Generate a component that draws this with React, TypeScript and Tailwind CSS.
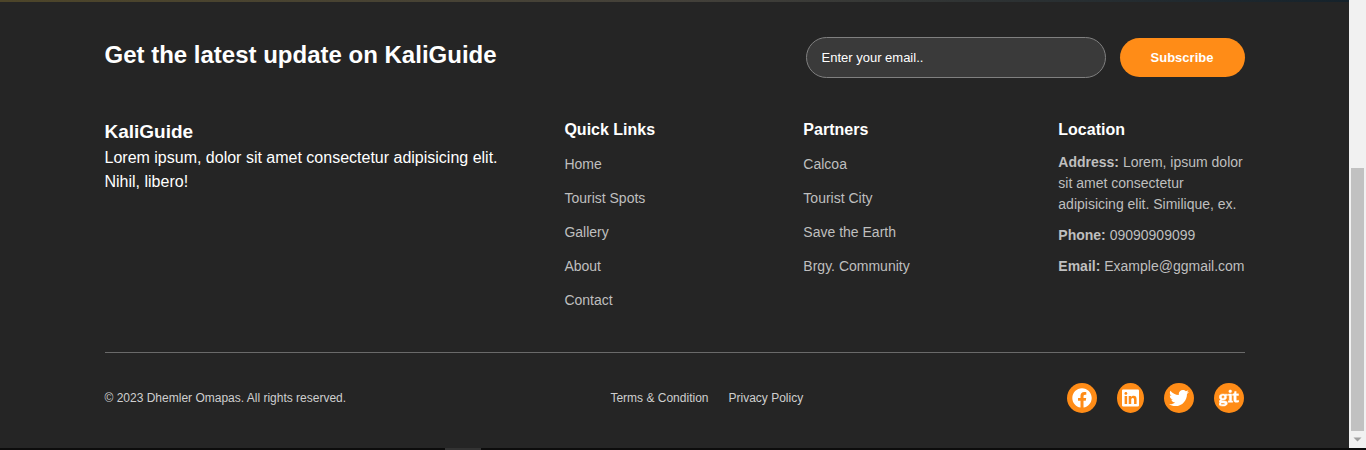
import { FaFacebook, FaGit, FaLinkedin, FaTwitter } from "react-icons/fa";

const quickLinks = ["Home", "Tourist Spots", "Gallery", "About", "Contact"];
const partners = ["Calcoa", "Tourist City", "Save the Earth", "Brgy. Community"];

function LinkColumn({ title, items }: { title: string; items: string[] }) {
  return (
    <nav aria-label={title}>
      <h3 className="text-base font-bold text-white">{title}</h3>
      <ul className="mt-[11px] flex flex-col gap-3">
        {items.map((item) => (
          <li key={item} className="text-sm leading-[22px]">
            <a href="#" className="text-[#bfbfbf] hover:text-white">
              {item}
            </a>
          </li>
        ))}
      </ul>
    </nav>
  );
}

function Newsletter() {
  return (
    <section className="flex items-center justify-between">
      <h2 className="-mt-1.5 text-2xl font-bold">Get the latest update on KaliGuide</h2>
      <form className="flex items-center gap-[14px]" onSubmit={(e) => e.preventDefault()}>
        <input
          type="email"
          aria-label="Email"
          placeholder="Enter your email.."
          className="h-[41px] w-[300px] rounded-full border border-[#808080] bg-[#3a3a3a] px-[15px] text-[13px] text-white outline-none placeholder:text-white"
        />
        <button
          type="submit"
          className="h-[39px] w-[125px] rounded-full bg-[#ff8c17] text-[13px] font-bold text-white"
        >
          Subscribe
        </button>
      </form>
    </section>
  );
}

const socialClass = "rounded-[50%] bg-[#ff8c17] p-[5px] text-white";

function SocialLinks() {
  return (
    <div className="flex items-center gap-5">
      <a href="#" aria-label="Facebook" className={socialClass}>
        <FaFacebook className="h-5 w-5" />
      </a>
      <a href="#" aria-label="LinkedIn" className={socialClass}>
        <FaLinkedin className="h-5 w-[17px]" />
      </a>
      <a href="#" aria-label="Twitter" className={socialClass}>
        <FaTwitter className="h-5 w-5" />
      </a>
      <a href="#" aria-label="Git" className={socialClass}>
        <FaGit className="h-5 w-5" stroke="currentColor" strokeWidth={12} />
      </a>
    </div>
  );
}

function ScrollTrack() {
  return (
    <div aria-hidden="true" className="flex w-[17px] shrink-0 flex-col items-center bg-[#f1f1f1]">
      <div className="grow-[168]" />
      <div className="w-[13px] grow-[263] bg-[#c1c1c1]" />
      <svg className="h-[17px] w-[17px] shrink-0" viewBox="0 0 17 17">
        <path d="M4.5 6.5h8l-4 4z" fill="#a0a0a0" />
      </svg>
    </div>
  );
}

export default function App() {
  return (
    <div className="flex min-h-screen flex-col bg-[#0c0c0c] font-['Liberation_Sans',Arial,sans-serif] text-white">
      <div className="flex grow">
        <div className="flex grow flex-col bg-[#252525]">
          <div className="h-[2px] bg-linear-to-r from-[#4d4529] via-[#44413a] to-[#15222b]" />
          <footer className="mx-auto w-full max-w-[1140px] pt-[35px]">
            <Newsletter />
            <div className="mt-10 grid grid-cols-[460fr_239fr_255fr_186fr] pb-[41px]">
              <section>
                <h2 className="text-[19px] leading-7 font-bold">KaliGuide</h2>
                <p className="max-w-[400px] text-base">
                  Lorem ipsum, dolor sit amet consectetur adipisicing elit. Nihil, libero!
                </p>
              </section>
              <LinkColumn title="Quick Links" items={quickLinks} />
              <LinkColumn title="Partners" items={partners} />
              <section>
                <h3 className="text-base font-bold">Location</h3>
                <address className="mt-[10px] flex flex-col gap-[10px] text-sm leading-[21px] text-[#bfbfbf] not-italic">
                  <p>
                    <b>Address:</b> Lorem, ipsum dolor sit amet consectetur adipisicing elit. Similique, ex.
                  </p>
                  <p>
                    <b>Phone:</b> 09090909099
                  </p>
                  <p className="whitespace-nowrap">
                    <b>Email:</b> Example@ggmail.com
                  </p>
                </address>
              </section>
            </div>
            <div className="flex items-center justify-between border-t border-[#6a6a6a] pt-[30px] pb-[35px] text-xs text-[#cfcfcf]">
              <p>© 2023 Dhemler Omapas. All rights reserved.</p>
              <div className="flex gap-5">
                <a href="#">Terms &amp; Condition</a>
                <a href="#">Privacy Policy</a>
              </div>
              <SocialLinks />
            </div>
          </footer>
        </div>
        <ScrollTrack />
      </div>
      <div aria-hidden="true" className="flex h-[2px]">
        <div className="w-[445px]" />
        <div className="w-9 bg-[#333333]" />
      </div>
    </div>
  );
}
